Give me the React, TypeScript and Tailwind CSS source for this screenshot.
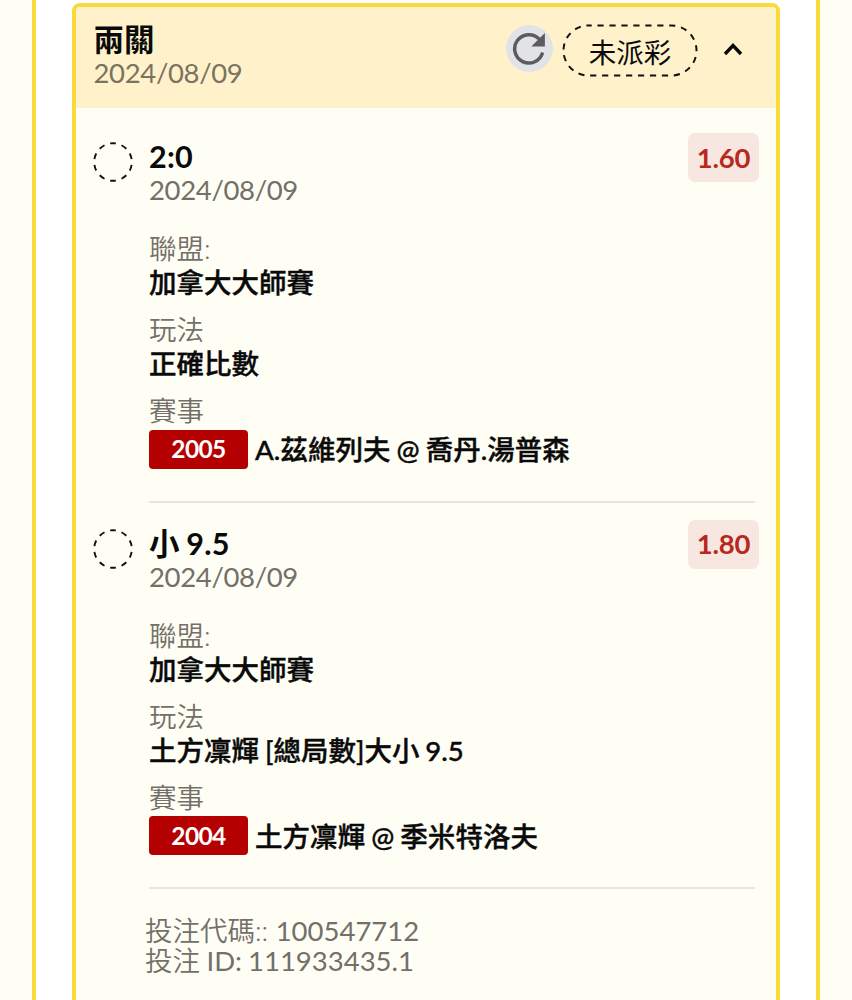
import type { ReactNode } from 'react';

type Bet = {
  pick: string;
  date: string;
  odds: string;
  league: string;
  market: string;
  code: string;
  match: string;
};

const BETS: Bet[] = [
  {
    pick: '2:0',
    date: '2024/08/09',
    odds: '1.60',
    league: '加拿大大師賽',
    market: '正確比數',
    code: '2005',
    match: 'A.茲維列夫 @ 喬丹.湯普森',
  },
  {
    pick: '小 9.5',
    date: '2024/08/09',
    odds: '1.80',
    league: '加拿大大師賽',
    market: '土方凜輝 [總局數]大小 9.5',
    code: '2004',
    match: '土方凜輝 @ 季米特洛夫',
  },
];

function PendingCircle() {
  return (
    <svg width="42" height="42" viewBox="0 0 42 42" fill="none" className="-ml-[0.5px] shrink-0">
      <circle
        cx="21"
        cy="21"
        r="18.8"
        stroke="#111"
        strokeWidth="1.9"
        pathLength="20"
        strokeDasharray="1 1"
        strokeDashoffset="0.5"
        transform="rotate(-90 21 21)"
      />
    </svg>
  );
}

function StatusPill({ children }: { children: ReactNode }) {
  return (
    <div className="relative flex h-[53px] w-[136px] items-center justify-center text-[27.5px]">
      <svg className="absolute inset-0" width="136" height="53" viewBox="0 0 136 53" fill="none">
        <rect x="1.5" y="1.5" width="133" height="50" rx="25" stroke="#111" strokeWidth="2" strokeDasharray="6.2 5.76" strokeDashoffset="3" />
      </svg>
      <span className="pt-[4px] leading-[30px]">{children}</span>
    </div>
  );
}

function RefreshButton() {
  return (
    <button className="-mt-[1px] flex size-[47px] items-center justify-center rounded-full bg-[#e2e3e6]">
      <svg width="34" height="34" viewBox="0 0 34 34" fill="none">
        <path d="M27.4 7.3A14.2 14.2 0 1 0 30.6 20.5" stroke="#5c5c5e" strokeWidth="3.5" />
        <path d="M32.9 1V14.6H19.3Z" fill="#5c5c5e" />
      </svg>
    </button>
  );
}

function Field({ label, children }: { label: string; children: ReactNode }) {
  return (
    <div className="mb-[13px]">
      <div className="h-[34px] font-[350] leading-[34px] text-[#737069]">{label}</div>
      <div className="h-[34px] font-medium leading-[34px] [-webkit-text-stroke:0.4px]">{children}</div>
    </div>
  );
}

function BetRow({ bet }: { bet: Bet }) {
  return (
    <div className="mb-[-8px] flex h-[394.6px] pl-[16px] pt-[25px]">
      <div className="w-[57px] shrink-0 pt-[8px]">
        <PendingCircle />
      </div>
      <div className="mr-[21px] flex flex-1 flex-col border-b-2 border-[#e8e5df]">
        <div className="flex h-[99.3px] justify-between">
          <div className="pt-[7px]">
            <div className="h-[33px] text-[30.5px] font-bold leading-[32px] tracking-[0.2px]">{bet.pick}</div>
            <div className="h-[34px] leading-[33px] tracking-[-0.35px] text-[#737069]">{bet.date}</div>
          </div>
          <div className="-mr-[4px] flex h-[49px] w-[71px] items-center justify-center rounded-[7px] bg-[#f7e7e0] font-bold tracking-[-0.2px] text-[#b7281f]">
            {bet.odds}
          </div>
        </div>
        <Field label="聯盟:">{bet.league}</Field>
        <Field label="玩法">{bet.market}</Field>
        <div className="h-[35.5px] font-[350] leading-[34px] text-[#737069]">賽事</div>
        <div className="flex h-[39px] items-center font-medium">
          <span className="mr-[7px] flex h-[39px] w-[99px] items-center justify-center rounded-[4px] bg-[#b40000] text-[24.5px] font-bold tracking-[-0.6px] text-white">
            {bet.code}
          </span>
          <span className="pt-[2px] tracking-[0.05px] [-webkit-text-stroke:0.4px]">{bet.match}</span>
        </div>
      </div>
    </div>
  );
}

export default function App() {
  return (
    <div
      lang="zh-Hant"
      className="h-[1000px] w-[852px] overflow-hidden bg-[#fffef5] pl-[32px] font-[Lato,'Noto_Sans_CJK_TC',sans-serif] text-[27.5px] leading-[34px] text-[#0a0a0a] [word-spacing:-1px]"
    >
      <div className="h-full w-[788px] border-x-4 border-[#fad93a] bg-white pl-[36px] pt-[3px]">
        <div className="h-[1010px] w-[708px] overflow-hidden rounded-t-[8px] border-4 border-[#fad93a] bg-[#fffef5]">
          <div className="flex h-[101px] bg-[#fff2cb] pl-[17.5px]">
            <div className="flex-1 pt-[16px]">
              <div className="h-[33px] text-[30.5px] font-bold leading-[32px]">兩關</div>
              <div className="h-[34px] leading-[33px] tracking-[-0.35px] text-[#7b735f]">2024/08/09</div>
            </div>
            <div className="flex h-[84px] items-center pr-[33px]">
              <RefreshButton />
              <div className="ml-[9.5px] pt-[3px]">
                <StatusPill>未派彩</StatusPill>
              </div>
              <svg width="20" height="14" viewBox="0 0 20 14" fill="none" className="ml-[25px]">
                <path d="M2 12L10 3.5L18 12" stroke="#0a0a0a" strokeWidth="3.4" />
              </svg>
            </div>
          </div>

          {BETS.map((bet) => (
            <BetRow key={bet.code} bet={bet} />
          ))}

          <div className="pl-[69px] pt-[34.5px] font-[350] leading-[30px] text-[#737069]">
            <div>
              投注代碼:: <span className="ml-[1px] font-normal">100547712</span>
            </div>
            <div>
              投注 <span className="font-normal">ID: 111933435.1</span>
            </div>
          </div>
        </div>
      </div>
    </div>
  );
}
